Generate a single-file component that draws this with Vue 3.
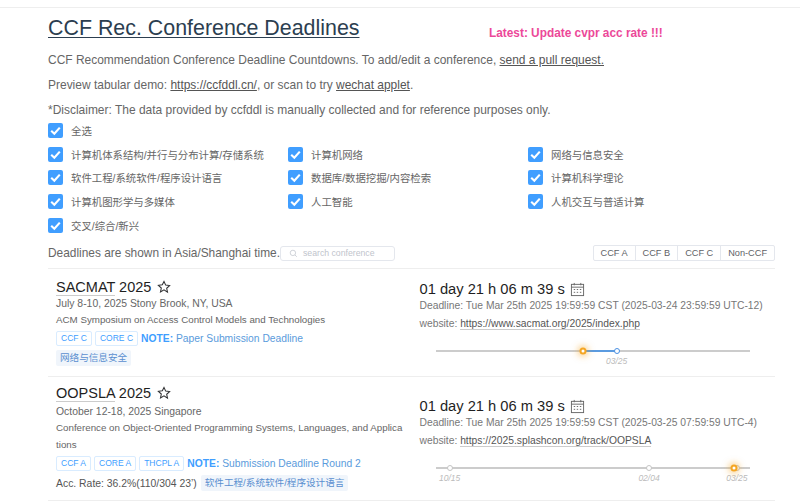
<script setup>
const cats = [
  ['计算机体系结构/并行与分布计算/存储系统', '计算机网络', '网络与信息安全'],
  ['软件工程/系统软件/程序设计语言', '数据库/数据挖掘/内容检索', '计算机科学理论'],
  ['计算机图形学与多媒体', '人工智能', '人机交互与普适计算'],
  ['交叉/综合/新兴']
].flat()
const types = ['CCF A', 'CCF B', 'CCF C', 'Non-CCF']
const confs = [
  {
    id: 'sacmat', name: 'SACMAT 2025', place: 'July 8-10, 2025 Stony Brook, NY, USA',
    full: 'ACM Symposium on Access Control Models and Technologies',
    tags: ['CCF C', 'CORE C'], note: 'Paper Submission Deadline', acc: '', sub: '网络与信息安全',
    deadline: 'Deadline: Tue Mar 25th 2025 19:59:59 CST (2025-03-24 23:59:59 UTC-12)',
    site: 'https://www.sacmat.org/2025/index.php',
    fill: { left: 46.9, width: 10.8 },
    dots: [{ x: 46.9, kind: 'now' }, { x: 57.7, kind: 'blue', label: '03/25' }]
  },
  {
    id: 'oopsla', name: 'OOPSLA 2025', place: 'October 12-18, 2025 Singapore',
    full: 'Conference on Object-Oriented Programming Systems, Languages, and Applications',
    tags: ['CCF A', 'CORE A', 'THCPL A'], note: 'Submission Deadline Round 2', acc: 'Acc. Rate: 36.2%(110/304 23’)', sub: '软件工程/系统软件/程序设计语言',
    deadline: 'Deadline: Tue Mar 25th 2025 19:59:59 CST (2025-03-25 07:59:59 UTC-4)',
    site: 'https://2025.splashcon.org/track/OOPSLA',
    fill: null,
    dots: [{ x: 4.5, kind: 'grey', label: '10/15' }, { x: 68, kind: 'grey', label: '02/04' }, { x: 96, kind: 'grey', label: '03/25' }, { x: 95, kind: 'now' }]
  }
]
</script>

<template>
  <div class="page">
    <div class="topbar"></div>
    <main class="wrap">
      <header class="head">
        <h1 class="title"><a>CCF Rec. Conference Deadlines</a></h1>
        <div class="latest">Latest: Update cvpr acc rate !!!</div>
      </header>
      <p class="line">CCF Recommendation Conference Deadline Countdowns. To add/edit a conference, <a>send a pull request.</a></p>
      <p class="line">Preview tabular demo: <a>https://ccfddl.cn/</a>, or scan to try <a>wechat applet</a>.</p>
      <p class="line">*Disclaimer: The data provided by ccfddl is manually collected and for reference purposes only.</p>

      <label class="check all"><span class="box"><svg viewBox="0 0 14 14"><path d="M3 7.3 5.9 10 11 4.3" /></svg></span>全选</label>
      <div class="cats">
        <label v-for="c in cats" :key="c" class="check"><span class="box"><svg viewBox="0 0 14 14"><path d="M3 7.3 5.9 10 11 4.3" /></svg></span>{{ c }}</label>
      </div>

      <div class="filter">
        <span class="tz">Deadlines are shown in Asia/Shanghai time.</span>
        <div class="search">
          <svg viewBox="0 0 12 12"><circle cx="5.2" cy="5.2" r="3.6" /><path d="m8 8 2.4 2.4" /></svg>
          <span>search conference</span>
        </div>
        <div class="types"><span v-for="t in types" :key="t">{{ t }}</span></div>
      </div>

      <section v-for="c in confs" :key="c.id" class="conf" :class="c.id">
        <div class="left">
          <div class="name"><a>{{ c.name.split(' ')[0] }}</a> {{ c.name.split(' ')[1] }}
            <svg class="star" viewBox="0 0 24 24"><path d="M12 2.6l2.9 6.2 6.7.8-5 4.6 1.4 6.7L12 17l-6 3.4 1.4-6.7-5-4.6 6.7-.8z" /></svg>
          </div>
          <div class="place">{{ c.place }}</div>
          <div class="full">{{ c.full }}</div>
          <div class="tagline">
            <span v-for="t in c.tags" :key="t" class="tag">{{ t }}</span>
            <span class="note"><b>NOTE:</b> {{ c.note }}</span>
          </div>
          <div class="subline">
            <span v-if="c.acc" class="acc">{{ c.acc }}</span>
            <span class="sub">{{ c.sub }}</span>
          </div>
        </div>
        <div class="right">
          <div class="count">01 day 21 h 06 m 39 s
            <svg class="cal" viewBox="0 0 16 16"><rect x="1.5" y="2.5" width="13" height="12" /><path d="M1.5 5.5h13M4.5 1v2.500M11.500 1v2.500" /><path class="dots" d="M4 8h1.500M7.200 8h1.500M10.500 8h1.500M4 11h1.500M7.200 11h1.500M10.500 11h1.500" /></svg>
          </div>
          <div class="dl">{{ c.deadline }}</div>
          <div class="site">website: <a>{{ c.site }}</a></div>
          <div class="timeline">
            <div class="track"></div>
            <div v-if="c.fill" class="fill" :style="{ left: c.fill.left + '%', width: c.fill.width + '%' }"></div>
            <template v-for="(d, i) in c.dots" :key="i">
              <span class="dot" :class="d.kind" :style="{ left: d.x + '%' }"></span>
              <span v-if="d.label" class="lab" :style="{ left: d.x + '%' }">{{ d.label }}</span>
            </template>
          </div>
        </div>
      </section>
    </main>
  </div>
</template>

<style>
html, body { margin: 0; background: #fff; overflow: hidden; }
</style>

<style scoped>
.page { width: 800px; height: 502px; overflow: hidden; font-family: "Liberation Sans", "Noto Sans CJK SC", sans-serif; color: #606266; }
.topbar { height: 7px; border-bottom: 1px solid #eeeeee; }
.wrap { width: 727px; margin-left: 48px; }
.head { display: flex; align-items: center; height: 40px; }
.title { margin: 0; font-size: 21.4px; font-weight: 400; color: #2c3e50; line-height: 28px; width: 441px; flex: none; }
.title a { text-decoration: underline; text-decoration-thickness: 1px; text-underline-offset: 2px; }
.latest { font-size: 11.85px; font-weight: 700; color: #ec4899; margin-top: 10px; }
.line { margin: 0; font-size: 11.98px; line-height: 25.2px; color: #666; }
.line a { color: #555; text-decoration: underline; }
.check { display: flex; align-items: center; gap: 8px; height: 23.7px; font-size: 10.4px; color: #666; }
.box { width: 15px; height: 15px; background: #409eff; border-radius: 2px; flex: none; display: flex; }
.box svg { width: 15px; height: 15px; fill: none; stroke: #fff; stroke-width: 2; }
.all { margin-top: -5px; }
.cats { display: grid; grid-template-columns: 240px 240px 240px; }
.filter { display: flex; align-items: center; height: 30px; margin-top: 1px; }
.tz { font-size: 11.9px; color: #666; }
.search { width: 115px; box-sizing: border-box; border: 1px solid #e4e7ed; border-radius: 3px; display: flex; align-items: center; gap: 5px; padding-left: 8px; font-size: 8.7px; color: #c0c4cc; height: 15px; }
.search svg { width: 9px; height: 9px; fill: none; stroke: #c0c4cc; stroke-width: 1; }
.types { margin-left: auto; display: flex; border: 1px solid #e4e7ed; border-radius: 2px; font-size: 9.2px; color: #606266; }
.types span { padding: 0 7px; line-height: 14px; height: 14px; border-left: 1px solid #e4e7ed; }
.types span:first-child { border-left: 0; }
.conf { display: grid; grid-template-columns: 50% 50%; border-top: 1px solid #eeeeee; box-sizing: border-box; }
.conf.sacmat { height: 108px; }
.conf.oopsla { height: 125px; border-bottom: 1px solid #eeeeee; }
.left { padding: 9px 0 0 8px; min-width: 0; }
.right { padding: 10px 0 0 8px; min-width: 0; }
.oopsla .right { padding-top: 19px; }
.oopsla .left { padding-top: 7px; }
.oopsla .place { margin-top: 2px; }
.name { font-size: 14.5px; color: #1f1f1f; line-height: 18px; }
.name a { border-bottom: 1px solid #ccc; }
.star { width: 14px; height: 14px; fill: none; stroke: #303133; stroke-width: 1.8; vertical-align: -2px; margin-left: 2px; }
.place { font-size: 10.4px; line-height: 15px; color: #666; }
.full { font-size: 9.75px; line-height: 17px; color: #666; width: 348px; word-break: break-all; }
.tagline { display: flex; align-items: center; margin-top: 1px; height: 18px; gap: 3px; }
.tag { font-size: 8.5px; color: #409eff; border: 1px solid #d9ecff; background: #fff; border-radius: 2px; line-height: 13px; padding: 0 4px; }
.note { font-size: 10.3px; color: #5a9bdc; }
.note b { color: #409eff; }
.subline { display: flex; align-items: center; margin-top: 2px; height: 18px; gap: 4px; }
.sub { font-size: 9.6px; background: #f0f5fb; color: #5a8fd0; padding: 0 4px; line-height: 16px; border-radius: 2px; }
.acc { font-size: 10.4px; color: #555; }
.count { font-size: 14.7px; color: #1f1f1f; line-height: 20px; display: flex; align-items: center; gap: 5px; }
.cal { width: 15px; height: 15px; fill: none; stroke: #666; stroke-width: 1; }
.cal .dots { stroke-width: 1; }
.dl { font-size: 10.3px; line-height: 14px; color: #777; }
.site { font-size: 10.3px; line-height: 18px; color: #777; margin-top: 2px; }
.site a { color: #555; border-bottom: 1px solid #ccc; }
.timeline { position: relative; width: 314px; margin: 17px 0 0 16px; height: 3px; }
.track { height: 2px; background: #ccc; }
.fill { position: absolute; top: 0; height: 2px; background: #5b9be0; }
.dot { position: absolute; top: 1px; width: 6px; height: 6px; box-sizing: border-box; border-radius: 50%; transform: translate(-50%, -50%); background: #fff; border: 1px solid #c4c4c4; }
.dot.blue { border: 1.5px solid #4a90e2; }
.dot.now { width: 7px; height: 7px; border: 2px solid #f5a623; box-shadow: 0 0 6px 2px rgba(245, 166, 35, .5); }
.lab { position: absolute; top: 6px; transform: translateX(-50%); font-size: 8.5px; font-style: italic; color: #bbb; }
</style>
